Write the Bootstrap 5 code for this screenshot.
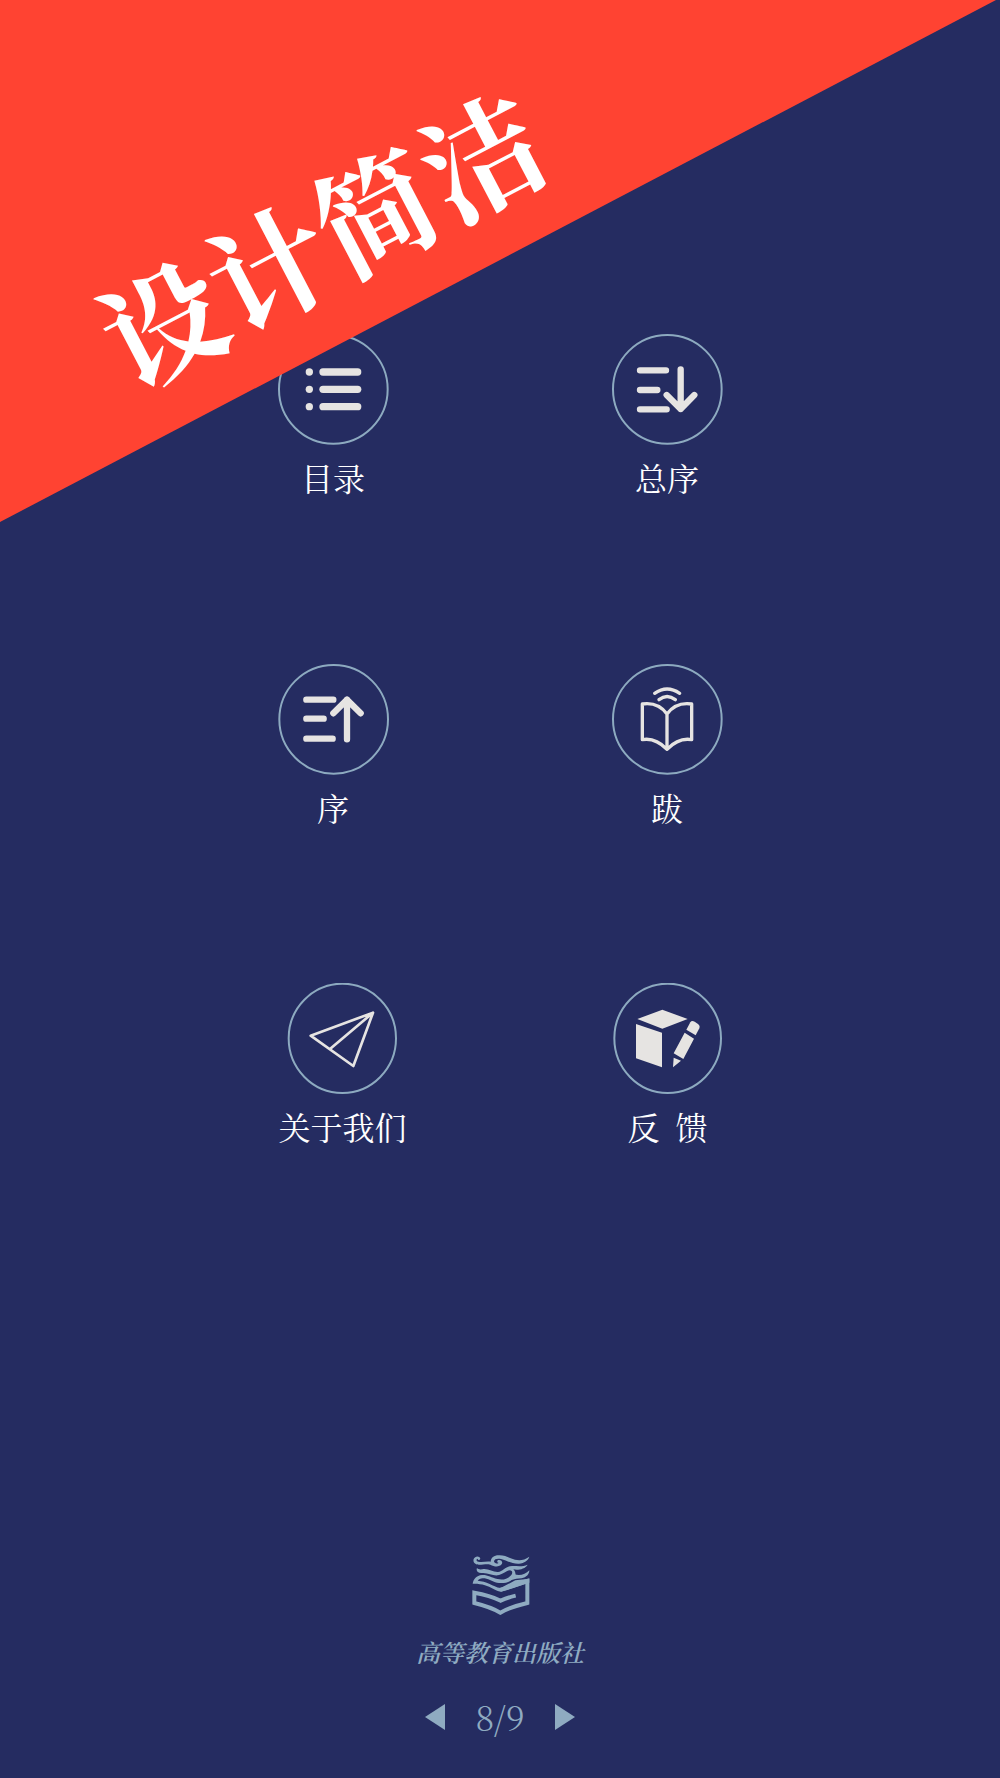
<!DOCTYPE html>
<html lang="zh-CN">
<head>
<meta charset="utf-8">
<meta name="viewport" content="width=device-width, initial-scale=1">
<title>设计简洁</title>
<link href="https://cdn.jsdelivr.net/npm/bootstrap@5.3.0/dist/css/bootstrap.min.css" rel="stylesheet">
<style>
  body { background: #252c61; color: #fff; font-family: "Liberation Serif", "Noto Serif CJK SC", "Noto Sans CJK SC", serif; }
  .page-menu { padding-top: 334px; }
  .menu-line { padding: 0 16.6%; margin-bottom: 167px; }
  .menu-line:nth-child(2) { margin-bottom: 156px; }
  .menu-line.wide-start { padding-left: 18%; padding-right: 17%; margin-bottom: 64px; }
  .menu-item { font-family: "Kaiti SC", KaiTi, STKaiti, "Noto Serif CJK SC", "Noto Sans CJK SC", serif; font-size: 32px; line-height: 40px; color: #fff; gap: 12px; }
  .menu-item svg { width: 111px; height: 111px; }
  .ring { fill: none; stroke: #8daac0; stroke-width: 6; }
  .ink { fill: #e6e4e2; }
  .pen { fill: none; stroke: #e6e4e2; stroke-linecap: round; stroke-linejoin: round; }
  .ribbon { height: 522px; background: #ff4332; clip-path: polygon(0 0, 99.6% 0, 0 100%); pointer-events: none; }
  .ribbon-title { left: 320px; top: 235px; font-size: 120px; line-height: 120px; font-weight: 700; font-family: "Noto Serif CJK SC", "Noto Sans CJK SC", serif; transform: translate(-50%, -50%) rotate(-27.6deg); }
  .page-foot { color: #8fabc1; padding-bottom: 40px; }
  .press-logo { width: 60px; height: 62px; margin-bottom: 20px; }
  .press-name { font-family: "Noto Serif CJK SC", "Noto Sans CJK SC", serif; font-size: 24px; font-weight: 600; line-height: 32px; font-style: italic; margin-bottom: 30px; }
  .pager { gap: 30px; font-family: "Noto Serif CJK SC", "Liberation Serif", serif; font-weight: 300; font-size: 34px; line-height: 38px; padding-bottom: 2px; }
  .pager button { color: inherit; line-height: 0; }
</style>
<script src="https://cdn.jsdelivr.net/npm/bootstrap@5.3.0/dist/js/bootstrap.bundle.min.js"></script>
</head>
<body>
<div class="position-relative d-flex flex-column min-vh-100">
  <main class="page-menu">
    <div class="menu-line d-flex">
      <div class="w-50 d-flex justify-content-center">
        <a href="#" class="menu-item d-flex flex-column align-items-center text-decoration-none text-nowrap">
          <svg viewBox="114 71 333 333" aria-hidden="true"><circle class="ring" cx="280" cy="237" r="163"/><g class="ink"><circle cx="208" cy="185" r="11"/><circle cx="208" cy="237" r="11"/><circle cx="208" cy="289" r="11"/><rect x="238" y="174" width="126" height="22" rx="11"/><rect x="238" y="226" width="126" height="22" rx="11"/><rect x="238" y="278" width="126" height="22" rx="11"/></g></svg>
          <span>目录</span>
        </a>
      </div>
      <div class="w-50 d-flex justify-content-center">
        <a href="#" class="menu-item d-flex flex-column align-items-center text-decoration-none text-nowrap">
          <svg viewBox="95 71 333 333" aria-hidden="true"><circle class="ring" cx="261" cy="237" r="163"/><path class="pen" stroke-width="19" d="M179 180H257M179 239H231M179 297H259M301 177V296M259 254 301 296 342 254"/></svg>
          <span>总序</span>
        </a>
      </div>
    </div>
    <div class="menu-line d-flex">
      <div class="w-50 d-flex justify-content-center">
        <a href="#" class="menu-item d-flex flex-column align-items-center text-decoration-none text-nowrap">
          <svg viewBox="116 40 333 333" aria-hidden="true"><circle class="ring" cx="283" cy="206" r="163"/><path class="pen" stroke-width="19" d="M201 147H282M201 204H253M201 264H280M323 266V147M282 188 323 147 364 188"/></svg>
          <span>序</span>
        </a>
      </div>
      <div class="w-50 d-flex justify-content-center">
        <a href="#" class="menu-item d-flex flex-column align-items-center text-decoration-none text-nowrap">
          <svg viewBox="98 40 333 333" aria-hidden="true"><circle class="ring" cx="264" cy="206" r="163"/><path class="pen" stroke-width="10" d="M263 190V296M263 190Q236 153 189 160V267Q228 260 263 296Q298 260 337 267V160Q290 153 263 190M226 128Q263 102 301 128M239 147Q263 128 288 147"/></svg>
          <span>跋</span>
        </a>
      </div>
    </div>
    <div class="menu-line wide-start d-flex">
      <div class="w-50 d-flex justify-content-center">
        <a href="#" class="menu-item d-flex flex-column align-items-center text-decoration-none text-nowrap">
          <svg viewBox="140 38 333 333" aria-hidden="true"><ellipse class="ring" cx="306" cy="204" rx="161" ry="164"/><path class="pen" stroke-width="8" d="M398 127 211 196 339 287ZM398 127 269 236"/></svg>
          <span>关于我们</span>
        </a>
      </div>
      <div class="w-50 d-flex justify-content-center">
        <a href="#" class="menu-item d-flex flex-column align-items-center text-decoration-none text-nowrap">
          <svg viewBox="99 38 333 333" aria-hidden="true"><ellipse class="ring" cx="266" cy="204" rx="160" ry="164"/><g class="ink"><path d="M175 146 250 118 326 146 250 175ZM171 161 249 187V291L171 264ZM317 187 345 205 313 266 284 249ZM284 262 306 271 282 291Z"/><path d="M322 178 334 156Q338 149 347 154L357 161Q364 166 361 174L350 195Z"/></g></svg>
          <span>反&ensp;馈</span>
        </a>
      </div>
    </div>
  </main>

  <footer class="page-foot mt-auto d-flex flex-column align-items-center">
    <svg class="press-logo" viewBox="15 17 180 186" role="img" aria-label="高等教育出版社"><g fill="#8fabc1"><path d="M46 31C44 22 30 22 26 32C23 43 31 49 42 49C56 49 66 46 76 49C86 54 98 57 107 51C116 44 111 33 100 35C95 37 96 43 101 43C96 48 88 45 87 39C88 31 98 30 108 32C128 38 142 47 162 46C178 44 189 37 193 25C178 36 164 37 150 34C134 30 122 21 104 21C88 20 78 27 77 40C64 38 52 43 40 40C33 38 33 32 38 31C39 36 44 36 46 31Z"/><path d="M36 59C32 68 40 76 52 74C70 73 82 83 99 81C115 78 124 67 134 66C142 66 144 73 139 80C129 92 114 96 97 92C79 88 68 79 51 80C34 82 26 91 23 106C50 105 68 112 84 121C94 126 104 130 108 130L193 103V91L151 96L107 119C94 118 84 111 74 107C62 101 50 98 38 97C42 91 49 88 59 90C74 92 86 103 102 104C126 106 143 97 151 84C153 75 150 68 145 63C158 66 180 63 188 49C172 56 158 53 143 53C122 52 115 69 99 71C85 72 72 61 56 62C47 64 41 64 36 59Z"/><path d="M148 78C164 83 181 79 193 66C193 78 184 87 170 90C158 92 150 91 141 95Z"/></g><path fill="none" stroke="#8fabc1" stroke-width="12" d="M106 124C132 119 158 108 187 98V164Q135 176 106 193Q77 176 28 164V133Q75 141 107 157Q127 148 152 142"/></svg>
    <div class="press-name">高等教育出版社</div>
    <nav class="pager d-flex align-items-center" aria-label="翻页">
      <button type="button" class="border-0 bg-transparent p-0" aria-label="上一页"><svg width="20" height="26" viewBox="0 0 20 26"><path fill="currentColor" d="M20 0V26L0 13Z"/></svg></button>
      <span>8/9</span>
      <button type="button" class="border-0 bg-transparent p-0" aria-label="下一页"><svg width="20" height="26" viewBox="0 0 20 26"><path fill="currentColor" d="M0 0V26L20 13Z"/></svg></button>
    </nav>
  </footer>

  <header class="ribbon position-absolute top-0 start-0 w-100">
    <h1 class="ribbon-title position-absolute m-0 text-nowrap">设计简洁</h1>
  </header>
</div>
</body>
</html>
